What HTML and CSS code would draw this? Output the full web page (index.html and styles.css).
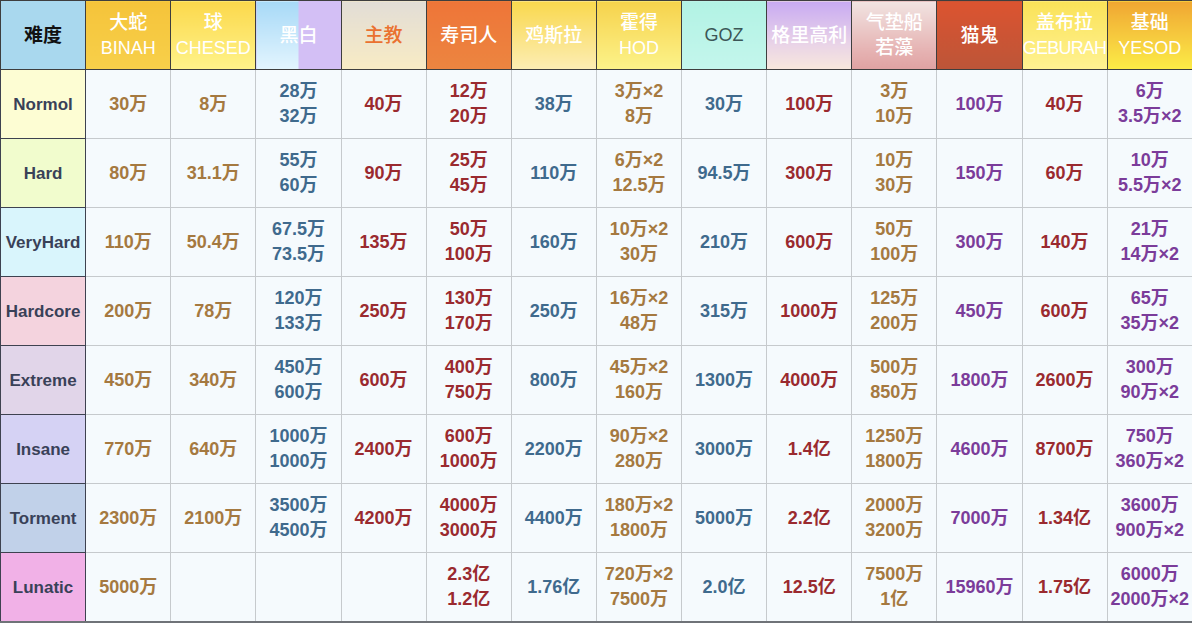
FILE: index.html
```html
<!DOCTYPE html>
<html lang="zh">
<head>
<meta charset="utf-8">
<title>难度表</title>
<link rel="stylesheet" href="styles.css">
</head>
<body>
<table class="grid">
  <colgroup>
    <col span="14" class="c">
  </colgroup>
  <thead>
    <tr class="head">
      <th class="h-diff">难度</th>
      <th class="h-binah">大蛇<br><span class="en">BINAH</span></th>
      <th class="h-chesed">球<br><span class="en">CHESED</span></th>
      <th class="h-bw">黑白</th>
      <th class="h-bishop">主教</th>
      <th class="h-sushi">寿司人</th>
      <th class="h-gozilla">鸡斯拉</th>
      <th class="h-hod">霍得<br><span class="en">HOD</span></th>
      <th class="h-goz"><span class="en">GOZ</span></th>
      <th class="h-greg">格里高利</th>
      <th class="h-hover">气垫船<br>若藻</th>
      <th class="h-cat">猫鬼</th>
      <th class="h-geb">盖布拉<br><span class="en tight">GEBURAH</span></th>
      <th class="h-yesod">基础<br><span class="en">YESOD</span></th>
    </tr>
  </thead>
  <tbody>
    <tr>
      <th class="r-normal">Normol</th>
      <td class="gold">30万</td><td class="gold">8万</td><td class="blue">28万<br>32万</td><td class="red">40万</td><td class="red">12万<br>20万</td><td class="blue">38万</td><td class="gold">3万×2<br>8万</td><td class="blue">30万</td><td class="red">100万</td><td class="gold">3万<br>10万</td><td class="purple">100万</td><td class="red">40万</td><td class="purple">6万<br>3.5万×2</td>
    </tr>
    <tr>
      <th class="r-hard">Hard</th>
      <td class="gold">80万</td><td class="gold">31.1万</td><td class="blue">55万<br>60万</td><td class="red">90万</td><td class="red">25万<br>45万</td><td class="blue">110万</td><td class="gold">6万×2<br>12.5万</td><td class="blue">94.5万</td><td class="red">300万</td><td class="gold">10万<br>30万</td><td class="purple">150万</td><td class="red">60万</td><td class="purple">10万<br>5.5万×2</td>
    </tr>
    <tr>
      <th class="r-vhard">VeryHard</th>
      <td class="gold">110万</td><td class="gold">50.4万</td><td class="blue">67.5万<br>73.5万</td><td class="red">135万</td><td class="red">50万<br>100万</td><td class="blue">160万</td><td class="gold">10万×2<br>30万</td><td class="blue">210万</td><td class="red">600万</td><td class="gold">50万<br>100万</td><td class="purple">300万</td><td class="red">140万</td><td class="purple">21万<br>14万×2</td>
    </tr>
    <tr>
      <th class="r-hcore">Hardcore</th>
      <td class="gold">200万</td><td class="gold">78万</td><td class="blue">120万<br>133万</td><td class="red">250万</td><td class="red">130万<br>170万</td><td class="blue">250万</td><td class="gold">16万×2<br>48万</td><td class="blue">315万</td><td class="red">1000万</td><td class="gold">125万<br>200万</td><td class="purple">450万</td><td class="red">600万</td><td class="purple">65万<br>35万×2</td>
    </tr>
    <tr>
      <th class="r-ext">Extreme</th>
      <td class="gold">450万</td><td class="gold">340万</td><td class="blue">450万<br>600万</td><td class="red">600万</td><td class="red">400万<br>750万</td><td class="blue">800万</td><td class="gold">45万×2<br>160万</td><td class="blue">1300万</td><td class="red">4000万</td><td class="gold">500万<br>850万</td><td class="purple">1800万</td><td class="red">2600万</td><td class="purple">300万<br>90万×2</td>
    </tr>
    <tr>
      <th class="r-ins">Insane</th>
      <td class="gold">770万</td><td class="gold">640万</td><td class="blue">1000万<br>1000万</td><td class="red">2400万</td><td class="red">600万<br>1000万</td><td class="blue">2200万</td><td class="gold">90万×2<br>280万</td><td class="blue">3000万</td><td class="red">1.4亿</td><td class="gold">1250万<br>1800万</td><td class="purple">4600万</td><td class="red">8700万</td><td class="purple">750万<br>360万×2</td>
    </tr>
    <tr>
      <th class="r-tor">Torment</th>
      <td class="gold">2300万</td><td class="gold">2100万</td><td class="blue">3500万<br>4500万</td><td class="red">4200万</td><td class="red">4000万<br>3000万</td><td class="blue">4400万</td><td class="gold">180万×2<br>1800万</td><td class="blue">5000万</td><td class="red">2.2亿</td><td class="gold">2000万<br>3200万</td><td class="purple">7000万</td><td class="red">1.34亿</td><td class="purple">3600万<br>900万×2</td>
    </tr>
    <tr>
      <th class="r-lun">Lunatic</th>
      <td class="gold">5000万</td><td class="gold"></td><td class="blue"></td><td class="red"></td><td class="red">2.3亿<br>1.2亿</td><td class="blue">1.76亿</td><td class="gold">720万×2<br>7500万</td><td class="blue">2.0亿</td><td class="red">12.5亿</td><td class="gold">7500万<br>1亿</td><td class="purple">15960万</td><td class="red">1.75亿</td><td class="purple">6000万<br>2000万×2</td>
    </tr>
  </tbody>
</table>
</body>
</html>
```

FILE: styles.css
```css
html, body {
  margin: 0;
  padding: 0;
  background: #f5fafd;
}

.grid {
  width: 1192px;
  height: 623px;
  table-layout: fixed;
  border-collapse: collapse;
  font-family: "Liberation Sans", "Noto Sans CJK SC", sans-serif;
}

.grid .c {
  width: 85.14px;
}

.grid th,
.grid td {
  padding: 0;
  text-align: center;
  vertical-align: middle;
  line-height: 25px;
  overflow: hidden;
  white-space: nowrap;
}

.head th {
  height: 68px;
  border: 1px solid #3e3e3e;
  color: #ffffff;
  font-size: 19px;
  font-weight: 500;
}

.head .en {
  font-weight: 400;
  font-size: 18px;
}

.head .tight {
  letter-spacing: -0.8px;
}

.grid td {
  height: 68px;
  border: 1px solid #c6cacd;
  background: #f5fafd;
  font-size: 18px;
  font-weight: 700;
}

.grid tbody th {
  border: 1px solid #3e4250;
  color: #394158;
  font-size: 17px;
  font-weight: 700;
}

.grid tbody tr:last-child td,
.grid tbody tr:last-child th {
  border-bottom: 2px solid #6f7378;
}

/* header cells */
.h-diff { background: #a9d8ee; color: #111 !important; font-weight: 700 !important; }
.h-binah { background: linear-gradient(180deg, #f5c33a 0%, #f7d04a 100%); }
.h-chesed { background: linear-gradient(180deg, #fbd84c 0%, #fff38a 100%); }
.h-bw {
  background:
    linear-gradient(90deg, transparent 0%, transparent 50%, #d3bff5 50%, #d3bff5 100%),
    linear-gradient(180deg, #a7d9f7 0%, #e3f5fe 100%);
}
.h-bishop { background: linear-gradient(180deg, #e2ddd6 0%, #f8ebc4 100%); color: #ea7130 !important; }
.h-sushi { background: linear-gradient(180deg, #ee7538 0%, #ec8540 100%); }
.h-gozilla { background: linear-gradient(180deg, #f9d84e 0%, #fcedb4 100%); }
.h-hod { background: linear-gradient(180deg, #f6d24c 0%, #fcf38a 100%); }
.h-goz { background: linear-gradient(180deg, #b2f2e4 0%, #c4f6ec 100%); color: #3c5656 !important; }
.h-greg { background: linear-gradient(180deg, #c8aaf2 0%, #e8d2e8 60%, #f8e8dc 100%); }
.h-hover { background: linear-gradient(180deg, #f1e4e2 0%, #e6b4b4 70%, #e0a2a2 100%); }
.h-cat { background: linear-gradient(180deg, #dc5430 0%, #bc5538 100%); }
.h-geb { background: linear-gradient(180deg, #fae258 0%, #fff292 100%); }
.h-yesod { background: linear-gradient(180deg, #f0a632 0%, #f7d040 60%, #fcec46 100%); }

/* row header cells */
.r-normal { background: #fdfdd3; }
.r-hard { background: #f1fccd; }
.r-vhard { background: #d9f5fc; }
.r-hcore { background: #f4d3de; }
.r-ext { background: #e1d5e9; }
.r-ins { background: #d5d2f4; }
.r-tor { background: #c1d1e9; }
.r-lun { background: #f1b1e7; }

/* value colours */
.gold { color: #a57940; }
.blue { color: #3f6a8d; }
.red { color: #9a2a2f; }
.purple { color: #7b3c9a; }
```
